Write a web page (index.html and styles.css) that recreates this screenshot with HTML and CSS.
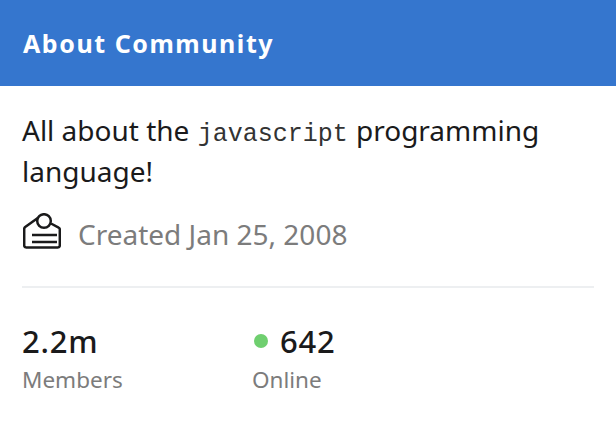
FILE: index.html
```html
<!DOCTYPE html>
<html lang="en">
<head>
    <meta charset="utf-8"/>
    <title>About Community</title>
    <link rel="stylesheet" href="styles.css">
</head>
<body>
<div class="about-card">
    <div class="about-header">About Community</div>
    <div class="about-body">
        <p class="about-text">All about the <code>javascript</code> programming language!</p>
        <div class="created-row">
            <svg class="cake-icon" width="38" height="36" viewBox="0 0 38 36" fill="none" stroke="#1a1a1b" stroke-width="2.5">
                <path d="M15.5 4.5 L2.2 14 Q1.2 14.8 1.2 16 V32.5 Q1.2 34.5 3.2 34.5 H34.8 Q36.8 34.5 36.8 32.5 V16.5 Q36.8 15.2 35.6 14.6 L28 10.5"/>
                <circle cx="21" cy="8" r="6.8"/>
                <path d="M9 22 H34 M9 29 H34"/>
            </svg>
            <span class="created-text">Created Jan 25, 2008</span>
        </div>
        <div class="stats">
            <div class="stat stat-members">
                <div class="stat-value">2.2m</div>
                <div class="stat-label">Members</div>
            </div>
            <div class="stat">
                <div class="stat-value"><span class="online-dot"></span>642</div>
                <div class="stat-label">Online</div>
            </div>
        </div>
    </div>
</div>
</body>
</html>
```

FILE: styles.css
```css
html, body {
    margin: 0;
    padding: 0;
    background: #fff;
}

.about-card {
    width: 616px;
    height: 438px;
    overflow: hidden;
}

.about-header {
    height: 86px;
    box-sizing: border-box;
    padding: 25px 23px 0;
    background: #3576ce;
    color: #fff;
    font-family: "Noto Sans", sans-serif;
    font-weight: 700;
    font-size: 25px;
    line-height: 36px;
    letter-spacing: 1.55px;
}

.about-body {
    padding: 24px 22px 0;
}

.about-text {
    margin: 0;
    font-family: "Noto Sans", sans-serif;
    font-size: 28px;
    line-height: 41px;
    color: #1a1a1b;
}

.about-text code {
    margin: 0 1px;
    font-family: "Liberation Mono", monospace;
    font-size: 25px;
    line-height: 1;
    color: #333;
}

.created-row {
    display: flex;
    align-items: center;
    gap: 17px;
    margin-top: 21px;
    padding-left: 1px;
}

.cake-icon {
    margin-bottom: 6px;
}

.created-text {
    font-family: "Noto Sans", sans-serif;
    font-size: 28px;
    line-height: 40px;
    color: #7c7c7c;
}

.stats {
    display: flex;
    margin-top: 31px;
    padding-top: 31px;
    border-top: 2px solid #edeff1;
}

.stat-members {
    width: 230px;
}

.stat-value {
    display: flex;
    align-items: center;
    font-family: "Noto Sans", sans-serif;
    font-size: 31px;
    line-height: 44px;
    font-weight: 500;
    letter-spacing: 0.8px;
    color: #1a1a1b;
}

.stat-label {
    font-family: "Noto Sans", sans-serif;
    font-size: 22.5px;
    line-height: 34px;
    color: #7c7c7c;
}

.online-dot {
    width: 14px;
    height: 14px;
    margin: 0 12px 0 2px;
    border-radius: 50%;
    background: #6fcf6f;
}
```
